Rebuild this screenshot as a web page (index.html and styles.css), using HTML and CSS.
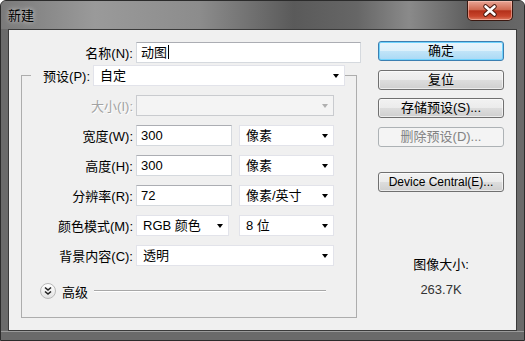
FILE: index.html
```html
<!DOCTYPE html>
<html lang="zh-CN">
<head>
  <meta charset="UTF-8" />
  <title>新建</title>
  <link rel="stylesheet" href="styles.css">
</head>
<body>
  <div class="window">
    <div class="titlebar">
      <span class="title">新建</span>
      <span class="close">
        <svg width="44" height="19" viewBox="0 0 44 19">
          <path d="M17.5 5.5 L26.5 13.5 M26.5 5.5 L17.5 13.5" stroke="#4a1a10" stroke-width="4.6" stroke-linecap="round"/>
          <path d="M17.5 5.5 L26.5 13.5 M26.5 5.5 L17.5 13.5" stroke="#fff" stroke-width="2.6" stroke-linecap="round"/>
        </svg>
      </span>
    </div>

    <div class="client">
      <div class="form">
        <div class="name-row">
          <span class="lbl">名称(N):</span>
          <div class="input name">动图<span class="caret"></span></div>
        </div>

        <fieldset class="group">
          <legend>
            <div class="preset-row">
              <span class="lbl">预设(P):</span>
              <div class="select preset">自定</div>
            </div>
          </legend>

          <div class="rows">
            <span class="lbl disabled">大小(I):</span>
            <div class="select span2 disabled"></div>

            <span class="lbl">宽度(W):</span>
            <div class="input num">300</div>
            <div class="select unit">像素</div>

            <span class="lbl">高度(H):</span>
            <div class="input num">300</div>
            <div class="select unit">像素</div>

            <span class="lbl">分辨率(R):</span>
            <div class="input num">72</div>
            <div class="select unit">像素/英寸</div>

            <span class="lbl">颜色模式(M):</span>
            <div class="select mode">RGB 颜色</div>
            <div class="select unit">8 位</div>

            <span class="lbl">背景内容(C):</span>
            <div class="select span2">透明</div>
          </div>

          <div class="advanced">
            <span class="toggle">
              <svg width="16" height="16" viewBox="0 0 16 16">
                <path d="M5 4.5 L8 7 L11 4.5 M5 8.5 L8 11 L11 8.5" fill="none" stroke="#222" stroke-width="1.6"/>
              </svg>
            </span>
            <span class="adv-label">高级</span>
            <span class="adv-line"></span>
          </div>
        </fieldset>
      </div>

      <div class="side">
        <div class="btn default">确定</div>
        <div class="btn">复位</div>
        <div class="btn save">存储预设(S)...</div>
        <div class="btn disabled">删除预设(D)...</div>
        <div class="btn device">Device Central(E)...</div>

        <div class="info">图像大小:</div>
        <div class="info size">263.7K</div>
      </div>
    </div>

    <div class="bottom"></div>
  </div>
</body>
</html>
```

FILE: styles.css
```css
body {
  margin: 0;
  font-family: "Liberation Sans", "Noto Sans CJK SC", sans-serif;
  font-size: 13px;
  color: #000;
  background: #fff;
}
.window {
  width: 525px;
  height: 341px;
  box-sizing: border-box;
  border: 1px solid #2b2b2b;
  border-radius: 6px 6px 0 0;
  background: #6a6a6a;
  display: flex;
  flex-direction: column;
  overflow: hidden;
}
.titlebar {
  height: 28px;
  display: flex;
  align-items: flex-start;
  background: linear-gradient(90deg, #7a7a7a 0%, #9a9a9a 18%, #8c8c8c 38%, #5a5a5a 56%, #666 68%, #8a8a8a 78%, #5c5c5c 90%, #686868 100%);
}
.title {
  margin: 6px 0 0 7px;
  line-height: 17px;
  text-shadow: 0 0 5px rgba(255, 255, 255, 0.8);
}
.close {
  margin-left: auto;
  margin-right: 11px;
  width: 46px;
  height: 20px;
  box-sizing: border-box;
  border: 1px solid #3a1810;
  border-top: none;
  border-radius: 0 0 5px 5px;
  background: linear-gradient(#e9a595 0%, #d06a52 45%, #b3301a 52%, #c8452c 80%, #dd7a60 100%);
  box-shadow: inset 0 0 0 1px rgba(255, 210, 200, 0.5);
}
.close svg {
  display: block;
}
.client {
  margin: 0 7px;
  height: 302px;
  box-sizing: border-box;
  border: 1px solid #3a3a3a;
  background: #f0f0f0;
  display: flex;
}
.bottom {
  flex: 1;
  border-top: 1px solid #9a9a9a;
}

/* left side */
.form {
  width: 352px;
}
.lbl {
  text-align: right;
  white-space: nowrap;
}
.lbl.disabled {
  color: #a3a3a3;
  text-shadow: 1px 1px 0 #fff;
}
.name-row {
  display: flex;
  align-items: center;
  margin-top: 12px;
  height: 21px;
}
.name-row .lbl {
  width: 124px;
  margin-right: 3px;
}
.input, .select {
  box-sizing: border-box;
  height: 21px;
  line-height: 19px;
  border: 1px solid #d5d9de;
  border-top-color: #abadb3;
  background: #fff;
  padding-left: 4px;
  white-space: nowrap;
}
.input.name {
  width: 225px;
}
.caret {
  display: inline-block;
  width: 1px;
  height: 14px;
  background: #000;
  vertical-align: -2px;
  margin-left: 1px;
}
.select {
  position: relative;
  border-color: #e2e3ea;
  padding-left: 6px;
}
.select::after {
  content: "";
  position: absolute;
  right: 5px;
  top: 8px;
  border-left: 3.5px solid transparent;
  border-right: 3.5px solid transparent;
  border-top: 4px solid #000;
}
.select.disabled {
  background: #f4f4f4;
  border-color: #c9cbcf;
}
.select.disabled::after {
  border-top-color: #b0b0b0;
}

.group {
  margin: 2px 0 0 12px;
  padding: 0 0 18px 0;
  width: 336px;
  box-sizing: border-box;
  border: 1px solid #adadad;
  min-width: 0;
}
.group legend {
  margin-left: 9px;
  padding: 0;
}
.preset-row {
  display: flex;
  align-items: center;
}
.preset-row .lbl {
  width: 59px;
  margin-right: 3px;
}
.select.preset {
  width: 252px;
}
.rows {
  display: grid;
  grid-template-columns: 114px 103px 95px;
  grid-auto-rows: 21px;
  row-gap: 9px;
  align-items: center;
  margin-top: 9px;
}
.rows .lbl {
  padding-right: 3px;
}
.input.num {
  width: 96px;
}
.select.mode {
  width: 93px;
}
.select.unit {
  width: 95px;
}
.select.span2 {
  grid-column: span 2;
  width: 198px;
}
.advanced {
  display: flex;
  align-items: center;
  height: 16px;
  margin: 17px 30px 0 18px;
}
.toggle {
  width: 16px;
  height: 16px;
  box-sizing: border-box;
  border-radius: 50%;
  border: 1px solid #b8b8b8;
  background: linear-gradient(#fff, #e2e2e2);
}
.toggle svg {
  display: block;
  margin: -1px;
}
.adv-label {
  margin-left: 6px;
}
.adv-line {
  flex: 1;
  margin-left: 6px;
  border-top: 1px solid #a8a8a8;
  border-bottom: 1px solid #fff;
}

/* right side */
.side {
  width: 126px;
  margin-left: 17px;
  padding-top: 11px;
}
.btn {
  height: 20px;
  box-sizing: border-box;
  border: 1px solid #707070;
  border-radius: 3px;
  background: linear-gradient(#f2f2f2 0%, #ebebeb 50%, #dddddd 51%, #cfcfcf 100%);
  text-align: center;
  line-height: 18px;
  box-shadow: inset 0 0 0 1px rgba(255, 255, 255, 0.6);
}
.btn + .btn {
  margin-top: 9px;
}
.btn.default {
  border-color: #3c7fb1;
  background: linear-gradient(#e9f5fc 0%, #dcf0fb 50%, #c1e4f8 51%, #a9d9f5 100%);
  box-shadow: inset 0 0 0 1px #6fd3fd;
}
.btn.save {
  margin-top: 8px;
}
.btn.disabled {
  border-color: #adb2b5;
  background: #f4f4f4;
  color: #838383;
  box-shadow: none;
}
.btn.device {
  margin-top: 25px;
  font-size: 12px;
}
.info {
  margin-top: 65px;
  text-align: center;
  line-height: 16px;
}
.info.size {
  margin-top: 9px;
  color: #333;
}
```
